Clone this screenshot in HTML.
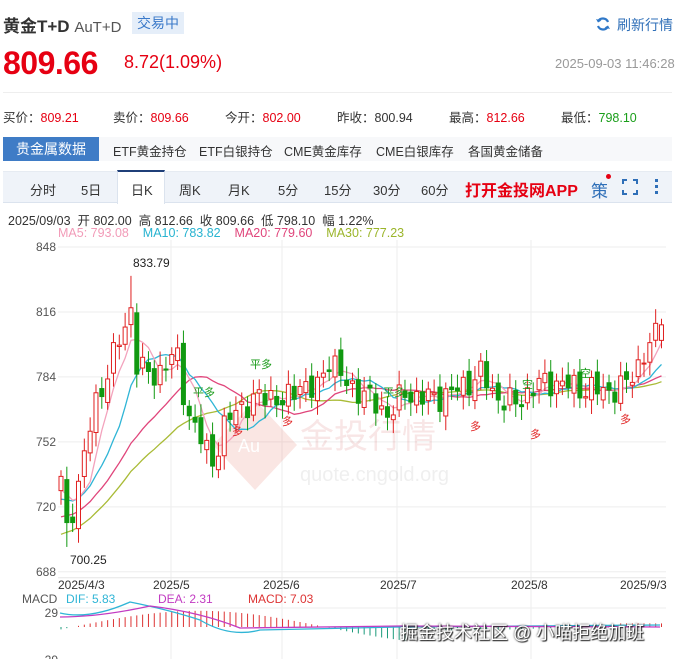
<!DOCTYPE html>
<html><head><meta charset="utf-8">
<style>
*{margin:0;padding:0;box-sizing:border-box}
body{width:682px;height:659px;overflow:hidden;background:#fff;font-family:"Liberation Sans","Noto Sans CJK SC",sans-serif;color:#333;position:relative}
.a{position:absolute;white-space:nowrap}
.red{color:#e60012}.grn{color:#1a9e1a}
</style></head><body>
<div class="a" style="left:3px;top:12px;font-size:17px;font-weight:bold;color:#333">黄金T+D <span style="font-weight:normal;font-size:15px;color:#555">AuT+D</span></div>
<div class="a" style="left:132px;top:12px;width:52px;height:22px;background:#e5eef9;color:#3a79c9;font-size:14px;line-height:22px;text-align:center">交易中</div>
<svg class="a" style="left:595px;top:16px" width="16" height="16" viewBox="0 0 16 16"><path d="M13 6A5.5 5.5 0 0 0 3 5.5M3 10a5.5 5.5 0 0 0 10 .5" fill="none" stroke="#2f78c8" stroke-width="2.2"/><path d="M1 3l2 3.5 3.5-2z M15 13l-2-3.5-3.5 2z" fill="#2f78c8"/></svg>
<div class="a" style="left:617px;top:15px;font-size:14px;color:#2f6fb8">刷新行情</div>
<div class="a red" style="left:3px;top:45px;font-size:32px;font-weight:bold;letter-spacing:-0.5px">809.66</div>
<div class="a red" style="left:124px;top:52px;font-size:18px">8.72(1.09%)</div>
<div class="a" style="left:555px;top:56px;font-size:13px;color:#999">2025-09-03 11:46:28</div>
<div class="a" style="left:3px;top:92px;width:669px;height:1px;background:#eee"></div>
<div class="a" style="left:3px;top:107px;font-size:12.5px;color:#333">买价：<span class="red">809.21</span></div>
<div class="a" style="left:113px;top:107px;font-size:12.5px">卖价：<span class="red">809.66</span></div>
<div class="a" style="left:225px;top:107px;font-size:12.5px">今开：<span class="red">802.00</span></div>
<div class="a" style="left:337px;top:107px;font-size:12.5px">昨收：800.94</div>
<div class="a" style="left:449px;top:107px;font-size:12.5px">最高：<span class="red">812.66</span></div>
<div class="a" style="left:561px;top:107px;font-size:12.5px">最低：<span class="grn">798.10</span></div>
<div class="a" style="left:3px;top:137px;width:669px;height:24px;background:#f7f8fa"></div>
<div class="a" style="left:3px;top:137px;width:96px;height:24px;background:#3f7cc6;color:#fff;font-size:14px;line-height:24px;text-align:center">贵金属数据</div>
<div class="a" style="left:113px;top:141px;font-size:12.5px">ETF黄金持仓</div>
<div class="a" style="left:199px;top:141px;font-size:12.5px">ETF白银持仓</div>
<div class="a" style="left:284px;top:141px;font-size:12.5px">CME黄金库存</div>
<div class="a" style="left:376px;top:141px;font-size:12.5px">CME白银库存</div>
<div class="a" style="left:468px;top:141px;font-size:12.5px">各国黄金储备</div>
<div class="a" style="left:3px;top:171px;width:669px;height:32px;background:#eff3f9;border-bottom:1px solid #dbe3ee;border-top:1px solid #e6ebf2"></div>
<div class="a" style="left:117px;top:170px;width:48px;height:34px;background:#fff;border-top:2px solid #1f3f78;border-left:1px solid #dbe3ee;border-right:1px solid #dbe3ee"></div>
<div class="a" style="top:180px;left:30px;font-size:13px;color:#333">分时</div>
<div class="a" style="top:180px;left:81px;font-size:13px">5日</div>
<div class="a" style="top:180px;left:131px;font-size:13px">日K</div>
<div class="a" style="top:180px;left:179px;font-size:13px">周K</div>
<div class="a" style="top:180px;left:228px;font-size:13px">月K</div>
<div class="a" style="top:180px;left:278px;font-size:13px">5分</div>
<div class="a" style="top:180px;left:324px;font-size:13px">15分</div>
<div class="a" style="top:180px;left:373px;font-size:13px">30分</div>
<div class="a" style="top:180px;left:421px;font-size:13px">60分</div>
<div class="a" style="top:177px;left:465px;font-size:16px;font-weight:bold;color:#e60012">打开金投网APP</div>
<div class="a" style="top:177px;left:591px;font-size:17px;color:#2f6fb8">策</div>
<div class="a" style="top:174px;left:606px;width:5px;height:5px;border-radius:50%;background:#e60012"></div>
<svg class="a" style="left:622px;top:179px" width="16" height="16"><path d="M1 5V1h4M11 1h4v4M15 11v4h-4M5 15H1v-4" fill="none" stroke="#2f6fb8" stroke-width="2"/></svg>
<div class="a" style="left:655px;top:179px;width:3px;height:3px;background:#2f6fb8;box-shadow:0 6px 0 #2f6fb8,0 12px 0 #2f6fb8"></div>
<div class="a" style="left:8px;top:210px;font-size:12.5px;color:#333">2025/09/03 &nbsp;开 802.00 &nbsp;高 812.66 &nbsp;收 809.66 &nbsp;低 798.10 &nbsp;幅 1.22%</div>
<div class="a" style="left:58px;top:226px;font-size:12.5px"><span style="color:#f29bb8">MA5: 793.08</span> &nbsp;&nbsp;&nbsp;<span style="color:#27b3d0">MA10: 783.82</span> &nbsp;&nbsp;&nbsp;<span style="color:#e0457b">MA20: 779.60</span> &nbsp;&nbsp;&nbsp;<span style="color:#9bb52a">MA30: 777.23</span></div>
<svg id="ch" class="a" style="left:0;top:240px" width="682" height="419"></svg>
<div class="a" style="left:400px;top:619px;font-size:18px;color:#fff;text-shadow:0 0 2px #222,1px 1px 1px #222">掘金技术社区 @ 小喵拒绝加班</div>
<script>
var s='',T=240;
function Y(p){return 247-T+(848-p)*2.03}
var grid=[848,816,784,752,720,688];
grid.forEach(function(g){var y=Y(g);s+='<line x1="58" x2="666" y1="'+y+'" y2="'+y+'" stroke="#eee"/><text x="56" y="'+(y+4)+'" font-size="12" fill="#555" text-anchor="end" font-family="Liberation Sans">'+g+'</text>'});
[171,282,397,531].forEach(function(x){s+='<line x1="'+x+'" x2="'+x+'" y1="0" y2="419" stroke="#eee"/>'});
s+='<line x1="58" x2="666" y1="'+(Y(688)+6)+'" y2="'+(Y(688)+6)+'" stroke="#e5e5e5"/>';
var dl=[[58,'2025/4/3'],[153,'2025/5'],[263,'2025/6'],[380,'2025/7'],[511,'2025/8'],[620,'2025/9/3']];
dl.forEach(function(d){s+='<text x="'+d[0]+'" y="349" font-size="12" fill="#333" font-family="Liberation Sans">'+d[1]+'</text>'});
s+='<g opacity="0.13"><path d="M255 160 L297 205 L255 250 L213 205Z" fill="#e0452f"/><text x="238" y="212" font-size="18" fill="#fff" font-family="Liberation Sans">Au</text><text x="300" y="208" font-size="34" fill="#c44" font-family="Noto Sans CJK SC">金投行情</text><text x="300" y="241" font-size="20" fill="#888" font-family="Liberation Sans">quote.cngold.org</text></g>';
var A=[[61,732],[66,706],[80,735],[95,770],[110,790],[125,808],[131,818],[136,792],[150,783],[165,790],[176,796],[186,770],[196,758],[212,742],[225,760],[240,770],[255,772],[270,776],[285,770],[300,782],[315,775],[330,795],[345,780],[360,778],[375,770],[390,766],[405,776],[430,773],[460,778],[480,786],[495,775],[515,770],[530,778],[550,782],[575,779],[600,777],[625,779],[640,792],[664,810]];
function tr(x){for(var i=1;i<A.length;i++)if(x<=A[i][0]){var a=A[i-1],b=A[i];return a[1]+(b[1]-a[1])*(x-a[0])/(b[0]-a[0])}return 810}
var N=104,cl=[],hist=[];
for(var k=0;k<30;k++)hist.push(680+k*1.7);
var prev=728;
for(var i=0;i<N;i++){var x=61+i*5.83;var c=tr(x)+Math.sin(i*2.3)*5+Math.cos(i*1.3)*3;if(i==N-1)c=809.66;var o=prev+Math.sin(i*3.7)*3;if(i==N-1)o=802;cl.push([x,o,c]);prev=c;}
var all=hist.concat(cl.map(function(d){return d[2]}));
function ma(n,col){var p='';for(var i=0;i<N;i++){var j=i+30,sm=0;for(var k=0;k<n;k++)sm+=all[j-k];p+=(i?'L':'M')+cl[i][0].toFixed(1)+' '+Y(sm/n).toFixed(1)}s+='<path d="'+p+'" fill="none" stroke="'+col+'" stroke-width="1.3"/>'}
ma(30,'#a9bb36');ma(20,'#e0457b');ma(10,'#2fb5d6');ma(5,'#f3a3bd');
cl.forEach(function(d,i){var up=d[2]>=d[1],col=up?'#e02020':'#119911';var hi=Math.max(d[1],d[2])+3+Math.abs(Math.sin(i))*4,lo=Math.min(d[1],d[2])-3-Math.abs(Math.cos(i))*4;if(i==12){hi=833.79}if(i==1)lo=700.25;if(i==N-1){hi=812.66;lo=798.1}
s+='<line x1="'+d[0]+'" x2="'+d[0]+'" y1="'+Y(hi)+'" y2="'+Y(lo)+'" stroke="'+col+'"/>';var t=Y(Math.max(d[1],d[2])),h=Math.max(1,Math.abs(Y(d[1])-Y(d[2])));
s+='<rect x="'+(d[0]-2)+'" y="'+t+'" width="4" height="'+h+'" fill="'+(up?'#fff':col)+'" stroke="'+col+'" stroke-width="1"/>';});
s+='<text x="133" y="27" font-size="12" fill="#222" font-family="Liberation Sans">833.79</text><text x="70" y="324" font-size="12" fill="#222" font-family="Liberation Sans">700.25</text>';
function sig(x,y,t,c){s+='<text x="'+x+'" y="'+(y-T)+'" font-size="11" fill="'+c+'" font-family="Noto Sans CJK SC">'+t+'</text>'}
sig(250,368,'平多','#169a16');sig(193,396,'平多','#169a16');sig(383,396,'平多','#169a16');sig(522,388,'空','#169a16');sig(580,377,'空','#169a16');
sig(232,435,'多','#e02020');sig(282,425,'多','#e02020');sig(470,430,'多','#e02020');sig(530,438,'多','#e02020');sig(620,423,'多','#e02020');
s+='<text x="22" y="363" font-size="12" fill="#555" font-family="Liberation Sans">MACD</text><text x="66" y="363" font-size="12" fill="#2fb5d6" font-family="Liberation Sans">DIF: 5.83</text><text x="158" y="363" font-size="12" fill="#c23bc2" font-family="Liberation Sans">DEA: 2.31</text><text x="248" y="363" font-size="12" fill="#d33" font-family="Liberation Sans">MACD: 7.03</text>';
s+='<line x1="58" x2="666" y1="368" y2="368" stroke="#eee"/><text x="58" y="377" font-size="12" fill="#555" text-anchor="end" font-family="Liberation Sans">29</text><text x="58" y="424" font-size="12" fill="#555" text-anchor="end" font-family="Liberation Sans">-29</text>';
var z=387;for(var i=0;i<N;i++){var x=cl[i][0];var v=Math.sin((i-2)/104*Math.PI*2.4)*9*(i<60?1:0.2);if(i>95)v=2;var col=v>=0?'#d33':'#1a9a7a';s+='<line x1="'+x+'" x2="'+x+'" y1="'+z+'" y2="'+(z-v*1.8)+'" stroke="'+col+'"/>'}
s+='<path d="M60 373 Q90 380 130 362 Q170 370 200 380 Q230 398 260 390 L400 387 L660 385" fill="none" stroke="#2fb5d6" stroke-width="1.3"/>';
s+='<path d="M60 377 Q100 377 150 366 Q200 372 240 388 L400 386 L660 387" fill="none" stroke="#c23bc2" stroke-width="1.3"/>';
document.getElementById('ch').innerHTML=s;
</script>
</body></html>
